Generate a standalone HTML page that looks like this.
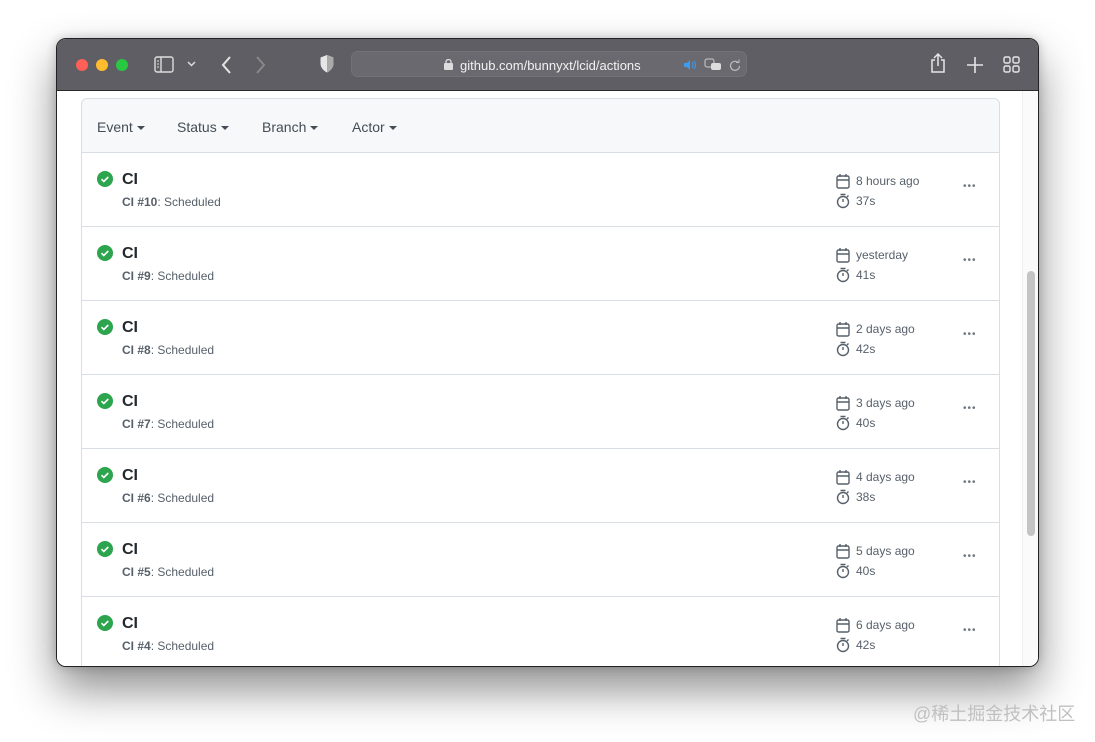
<!DOCTYPE html>
<html><head><meta charset="utf-8"><style>
*{box-sizing:border-box;margin:0;padding:0}
body{width:1095px;height:742px;background:#fff;position:relative;overflow:hidden;font-family:"Liberation Sans",Helvetica,Arial,sans-serif}
.win{position:absolute;left:56px;top:38px;width:983px;height:629px;border-radius:10px;overflow:hidden;background:#fff;border:1px solid #222;box-shadow:0 22px 45px rgba(0,0,0,.45),0 0 10px rgba(0,0,0,.2)}
.bar{position:absolute;left:0;top:0;width:100%;height:52px;background:#5f5e64;border-bottom:1px solid #2a2a2a}
.dot{position:absolute;top:20px;width:12px;height:12px;border-radius:50%}
.url{position:absolute;left:294px;top:12px;width:396px;height:26px;border-radius:7px;background:#6a696f;border:1px solid #737278}
.url span{position:absolute;left:108px;top:6px;color:#f2f2f2;font-size:13px}
.content{position:absolute;left:0;top:52px;right:0;bottom:0;background:#fff}
.box{position:absolute;left:24px;top:7px;width:919px;height:600px;border:1px solid #d8dee4;border-radius:6px 6px 0 0}
.hdr{height:54px;background:#f6f8fa;border-bottom:1px solid #d8dee4;border-radius:6px 6px 0 0;position:relative}
.hdr span{position:absolute;top:20px;font-size:14px;color:#444d56}
.caret{display:inline-block;width:0;height:0;border-left:4px solid transparent;border-right:4px solid transparent;border-top:4px solid #444d56;vertical-align:middle;margin-left:4px}
.row{height:74px;border-bottom:1px solid #d8dee4;position:relative}
.chk{position:absolute;left:15px;top:18px;width:16px;height:16px;border-radius:50%;background:#2da44e}
.t{position:absolute;left:40px;top:18px;font-size:16px;font-weight:bold;color:#24292f}
.s{position:absolute;left:40px;top:42px;font-size:12px;color:#57606a}
.s b{font-weight:bold}
.d{position:absolute;left:774px;top:18px;font-size:12px;color:#57606a;line-height:20px}
.d div{position:relative;padding-left:0}
.d svg{position:absolute;left:-20px;top:2px}
.more{position:absolute;left:881px;top:28px;font-size:10px;color:#6e7781;letter-spacing:1px}
.track{position:absolute;right:0;top:0;width:16px;height:100%;background:#fafafa;border-left:1px solid #eee}
.thumb{position:absolute;right:3px;top:180px;width:8px;height:265px;border-radius:4px;background:#c4c4c4}
.wm{position:absolute;left:913px;top:700px;font-size:18px;color:#c0c0c0;font-family:"Liberation Sans","Noto Sans CJK SC",sans-serif}
</style></head><body>
<div class="win">
 <div class="bar">
  <div class="dot" style="left:19px;background:#fe5f57"></div>
  <div class="dot" style="left:39px;background:#febc2e"></div>
  <div class="dot" style="left:59px;background:#28c840"></div>
  <svg style="position:absolute;left:97px;top:17px" width="20" height="17" viewBox="0 0 20 17"><rect x="1" y="1" width="18" height="15" rx="2" fill="none" stroke="#ddd" stroke-width="1.4"/><line x1="7" y1="1" x2="7" y2="16" stroke="#ddd" stroke-width="1.4"/><path d="M3 5h2M3 8h2M3 11h2" stroke="#ddd"/></svg>
  <svg style="position:absolute;left:130px;top:22px" width="9" height="6"><path d="M1 1l3.5 3.5L8 1" stroke="#ddd" stroke-width="1.5" fill="none"/></svg>
  <svg style="position:absolute;left:163px;top:16px" width="12" height="20"><path d="M10 2L3 10l7 8" stroke="#e6e6e6" stroke-width="2" fill="none"/></svg>
  <svg style="position:absolute;left:198px;top:16px" width="12" height="20"><path d="M2 2l7 8-7 8" stroke="#888" stroke-width="2" fill="none"/></svg>
  <svg style="position:absolute;left:262px;top:15px" width="16" height="20"><path d="M8 1L1.5 3.5v6C1.5 14 5 17 8 18.5 11 17 14.5 14 14.5 9.5v-6z" fill="#e6e6e6"/><path d="M8 1v17.5C11 17 14.5 14 14.5 9.5v-6z" fill="#aaa"/></svg>
  <div class="url"><svg style="position:absolute;left:92px;top:7px" width="9" height="11"><rect x="0" y="4" width="9" height="7" rx="1" fill="#ddd"/><path d="M2 4.5V3a2.5 2.5 0 015 0v1.5" stroke="#ddd" fill="none" stroke-width="1.3"/></svg><span>github.com/bunnyxt/lcid/actions</span>
   <svg style="position:absolute;left:332px;top:8px" width="12" height="10"><path d="M0 3h3l3-3v10L3 7H0z" fill="#3d9cf0"/><path d="M8 2q2 3 0 6M10 1q3 4 0 8" stroke="#3d9cf0" fill="none"/></svg>
   <svg style="position:absolute;left:352px;top:6px" width="18" height="14"><rect x="1" y="1" width="9" height="8" rx="2" fill="none" stroke="#ccc"/><rect x="7" y="5" width="10" height="7" rx="2" fill="#ddd"/></svg>
   <svg style="position:absolute;left:377px;top:7px" width="12" height="12"><path d="M9.5 4A4.5 4.5 0 1 0 10.5 7" stroke="#bbb" fill="none" stroke-width="1.2"/><path d="M7 3.5h3V0.5" stroke="#bbb" fill="none"/></svg>
  </div>
  <svg style="position:absolute;left:872px;top:13px" width="18" height="22"><path d="M6 8H3v12h12V8h-3" stroke="#e6e6e6" stroke-width="1.5" fill="none"/><path d="M9 14V2M5 6l4-4 4 4" stroke="#e6e6e6" stroke-width="1.5" fill="none"/></svg>
  <svg style="position:absolute;left:909px;top:17px" width="18" height="18"><path d="M9 1v16M1 9h16" stroke="#e6e6e6" stroke-width="1.6"/></svg>
  <svg style="position:absolute;left:946px;top:17px" width="17" height="17"><g fill="none" stroke="#e6e6e6" stroke-width="1.4"><rect x="1" y="1" width="6" height="6" rx="1.5"/><rect x="10" y="1" width="6" height="6" rx="1.5"/><rect x="1" y="10" width="6" height="6" rx="1.5"/><rect x="10" y="10" width="6" height="6" rx="1.5"/></g></svg>
 </div>
 <div class="content">
  <div class="box">
   <div class="hdr"><span style="left:15px">Event<i class="caret"></i></span><span style="left:95px">Status<i class="caret"></i></span><span style="left:180px">Branch<i class="caret"></i></span><span style="left:270px">Actor<i class="caret"></i></span></div>
   <div class="row"><div class="chk"><svg width="16" height="16"><path d="M4.5 8.2l2.3 2.3 4.5-4.5" stroke="#fff" stroke-width="1.6" fill="none"/></svg></div><div class="t">CI</div><div class="s"><b>CI #10</b>: Scheduled</div><div class="d"><div><svg width="14" height="16"><rect x="1" y="3" width="12" height="12" rx="1.5" fill="none" stroke="#57606a" stroke-width="1.4"/><path d="M1 7h12M4 1v3M10 1v3" stroke="#57606a" stroke-width="1.4"/></svg>8 hours ago</div><div><svg width="14" height="16"><circle cx="7" cy="9" r="5.5" fill="none" stroke="#57606a" stroke-width="1.4"/><path d="M4.5 1.5h5M7 9V6M11 4l1.5-1.5" stroke="#57606a" stroke-width="1.4"/></svg>37s</div></div><div class="more">•••</div></div>
   <div class="row"><div class="chk"><svg width="16" height="16"><path d="M4.5 8.2l2.3 2.3 4.5-4.5" stroke="#fff" stroke-width="1.6" fill="none"/></svg></div><div class="t">CI</div><div class="s"><b>CI #9</b>: Scheduled</div><div class="d"><div><svg width="14" height="16"><rect x="1" y="3" width="12" height="12" rx="1.5" fill="none" stroke="#57606a" stroke-width="1.4"/><path d="M1 7h12M4 1v3M10 1v3" stroke="#57606a" stroke-width="1.4"/></svg>yesterday</div><div><svg width="14" height="16"><circle cx="7" cy="9" r="5.5" fill="none" stroke="#57606a" stroke-width="1.4"/><path d="M4.5 1.5h5M7 9V6M11 4l1.5-1.5" stroke="#57606a" stroke-width="1.4"/></svg>41s</div></div><div class="more">•••</div></div>
   <div class="row"><div class="chk"><svg width="16" height="16"><path d="M4.5 8.2l2.3 2.3 4.5-4.5" stroke="#fff" stroke-width="1.6" fill="none"/></svg></div><div class="t">CI</div><div class="s"><b>CI #8</b>: Scheduled</div><div class="d"><div><svg width="14" height="16"><rect x="1" y="3" width="12" height="12" rx="1.5" fill="none" stroke="#57606a" stroke-width="1.4"/><path d="M1 7h12M4 1v3M10 1v3" stroke="#57606a" stroke-width="1.4"/></svg>2 days ago</div><div><svg width="14" height="16"><circle cx="7" cy="9" r="5.5" fill="none" stroke="#57606a" stroke-width="1.4"/><path d="M4.5 1.5h5M7 9V6M11 4l1.5-1.5" stroke="#57606a" stroke-width="1.4"/></svg>42s</div></div><div class="more">•••</div></div>
   <div class="row"><div class="chk"><svg width="16" height="16"><path d="M4.5 8.2l2.3 2.3 4.5-4.5" stroke="#fff" stroke-width="1.6" fill="none"/></svg></div><div class="t">CI</div><div class="s"><b>CI #7</b>: Scheduled</div><div class="d"><div><svg width="14" height="16"><rect x="1" y="3" width="12" height="12" rx="1.5" fill="none" stroke="#57606a" stroke-width="1.4"/><path d="M1 7h12M4 1v3M10 1v3" stroke="#57606a" stroke-width="1.4"/></svg>3 days ago</div><div><svg width="14" height="16"><circle cx="7" cy="9" r="5.5" fill="none" stroke="#57606a" stroke-width="1.4"/><path d="M4.5 1.5h5M7 9V6M11 4l1.5-1.5" stroke="#57606a" stroke-width="1.4"/></svg>40s</div></div><div class="more">•••</div></div>
   <div class="row"><div class="chk"><svg width="16" height="16"><path d="M4.5 8.2l2.3 2.3 4.5-4.5" stroke="#fff" stroke-width="1.6" fill="none"/></svg></div><div class="t">CI</div><div class="s"><b>CI #6</b>: Scheduled</div><div class="d"><div><svg width="14" height="16"><rect x="1" y="3" width="12" height="12" rx="1.5" fill="none" stroke="#57606a" stroke-width="1.4"/><path d="M1 7h12M4 1v3M10 1v3" stroke="#57606a" stroke-width="1.4"/></svg>4 days ago</div><div><svg width="14" height="16"><circle cx="7" cy="9" r="5.5" fill="none" stroke="#57606a" stroke-width="1.4"/><path d="M4.5 1.5h5M7 9V6M11 4l1.5-1.5" stroke="#57606a" stroke-width="1.4"/></svg>38s</div></div><div class="more">•••</div></div>
   <div class="row"><div class="chk"><svg width="16" height="16"><path d="M4.5 8.2l2.3 2.3 4.5-4.5" stroke="#fff" stroke-width="1.6" fill="none"/></svg></div><div class="t">CI</div><div class="s"><b>CI #5</b>: Scheduled</div><div class="d"><div><svg width="14" height="16"><rect x="1" y="3" width="12" height="12" rx="1.5" fill="none" stroke="#57606a" stroke-width="1.4"/><path d="M1 7h12M4 1v3M10 1v3" stroke="#57606a" stroke-width="1.4"/></svg>5 days ago</div><div><svg width="14" height="16"><circle cx="7" cy="9" r="5.5" fill="none" stroke="#57606a" stroke-width="1.4"/><path d="M4.5 1.5h5M7 9V6M11 4l1.5-1.5" stroke="#57606a" stroke-width="1.4"/></svg>40s</div></div><div class="more">•••</div></div>
   <div class="row"><div class="chk"><svg width="16" height="16"><path d="M4.5 8.2l2.3 2.3 4.5-4.5" stroke="#fff" stroke-width="1.6" fill="none"/></svg></div><div class="t">CI</div><div class="s"><b>CI #4</b>: Scheduled</div><div class="d"><div><svg width="14" height="16"><rect x="1" y="3" width="12" height="12" rx="1.5" fill="none" stroke="#57606a" stroke-width="1.4"/><path d="M1 7h12M4 1v3M10 1v3" stroke="#57606a" stroke-width="1.4"/></svg>6 days ago</div><div><svg width="14" height="16"><circle cx="7" cy="9" r="5.5" fill="none" stroke="#57606a" stroke-width="1.4"/><path d="M4.5 1.5h5M7 9V6M11 4l1.5-1.5" stroke="#57606a" stroke-width="1.4"/></svg>42s</div></div><div class="more">•••</div></div>
  </div>
  <div class="track"><div class="thumb"></div></div>
 </div>
</div>
<div class="wm">@稀土掘金技术社区</div>
</body></html>
